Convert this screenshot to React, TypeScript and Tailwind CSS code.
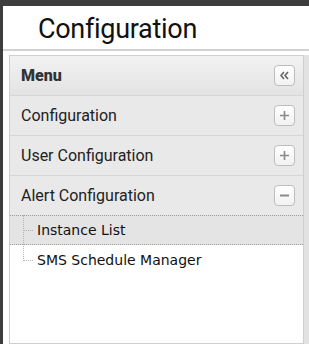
import React from 'react';

const Btn: React.FC<{ kind: 'plus' | 'minus' | 'collapse' }> = ({ kind }) => (
  <div className="w-[21px] h-[21px] rounded-[4px] border border-[#bdbdbd] bg-gradient-to-b from-white to-[#f2f2f2] flex items-center justify-center">
    <svg width="13" height="13" viewBox="0 0 13 13" fill="none" stroke="#8a8a8a" strokeWidth="1.6">
      {kind === 'plus' && <path d="M2 6.5h9M6.5 2v9" />}
      {kind === 'minus' && <path d="M2 6.5h9" strokeWidth="2" />}
      {kind === 'collapse' && <path d="M6 3L3 6.5 6 10M10 3L7 6.5 10 10" stroke="#666" />}
    </svg>
  </div>
);

const Row: React.FC<{ label: string; kind: 'plus' | 'minus' }> = ({ label, kind }) => (
  <div className="h-[40px] flex items-center justify-between pl-[11px] pr-[8px] bg-[#e9e9e9] border-t border-[#d6d6d6]">
    <span className="text-[16px] text-[#222]" style={{ fontFamily: 'Roboto, sans-serif' }}>{label}</span>
    <Btn kind={kind} />
  </div>
);

export default function App() {
  return (
    <div className="w-[309px] h-[344px] bg-[#3d3d3d] pt-[6px] pl-[3px] overflow-hidden">
      <div className="bg-white h-full flex flex-col">
        <div className="h-[45px] flex items-center pl-[35px] border-b-2 border-[#d2d2d2]">
          <span className="text-[27px] text-[#111] leading-none mt-[4px] tracking-[-0.3px]" style={{ fontFamily: 'Roboto, sans-serif' }}>
            Configuration
          </span>
        </div>
        <div className="flex-1 flex pt-[4px] pl-[6px]">
          <div className="flex-1 border border-[#cfcfcf] flex flex-col">
            <div className="h-[39px] flex items-center justify-between pl-[11px] pr-[8px] bg-gradient-to-b from-[#f2f2f2] to-[#e3e3e3]">
              <span className="text-[16px] font-black text-[#333]" style={{ fontFamily: 'Roboto, sans-serif' }}>Menu</span>
              <Btn kind="collapse" />
            </div>
            <Row label="Configuration" kind="plus" />
            <Row label="User Configuration" kind="plus" />
            <Row label="Alert Configuration" kind="minus" />
            <div className="relative bg-white flex-1" style={{ fontFamily: '"DejaVu Sans", sans-serif' }}>
              <div className="absolute left-[13px] top-0 h-[46px] border-l border-dotted border-[#b5b5b5]" />
              <div className="h-[30px] flex items-center bg-[#e4e4e4] border-y border-dotted border-[#9a9a9a]">
                <div className="w-[10px] ml-[13px] border-t border-dotted border-[#b5b5b5]" />
                <span className="ml-[4px] text-[14px] text-[#111]">Instance List</span>
              </div>
              <div className="h-[31px] flex items-center">
                <div className="w-[10px] ml-[13px] border-t border-dotted border-[#b5b5b5]" />
                <span className="ml-[4px] text-[14px] text-[#111]">SMS Schedule Manager</span>
              </div>
            </div>
          </div>
          <div className="w-[5px] bg-[#e2e2e2]" />
        </div>
      </div>
    </div>
  );
}
